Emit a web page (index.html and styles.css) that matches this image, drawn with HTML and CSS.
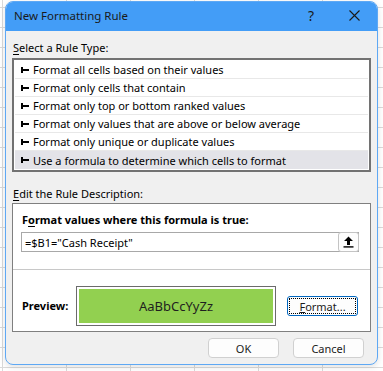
FILE: index.html
```html
<!DOCTYPE html>
<html lang="en">
<head>
    <meta charset="UTF-8">
    <meta name="viewport" content="width=device-width, initial-scale=1.0">
    <title>New Formatting Rule</title>
    <link rel="stylesheet" href="styles.css">
</head>
<body>

    <div class="dialog">
        <div class="titlebar">
            <span class="title">New Formatting Rule</span>
            <span class="title-btn help">?</span>
            <span class="title-btn close">
                <svg width="11" height="11" viewBox="0 0 11 11"><path d="M0.5 0.5L10.5 10.5M10.5 0.5L0.5 10.5" stroke="#1a1a1a" stroke-width="1.1" fill="none"/></svg>
            </span>
        </div>

        <div class="content">
            <div class="label"><u>S</u>elect a Rule Type:</div>
            <ul class="rule-list">
                <li><svg class="bullet" width="8" height="6" viewBox="0 0 8 6"><path d="M0 0h2v6H0zM0 2h8v2H0z" fill="#000"/></svg>Format all cells based on their values</li>
                <li><svg class="bullet" width="8" height="6" viewBox="0 0 8 6"><path d="M0 0h2v6H0zM0 2h8v2H0z" fill="#000"/></svg>Format only cells that contain</li>
                <li><svg class="bullet" width="8" height="6" viewBox="0 0 8 6"><path d="M0 0h2v6H0zM0 2h8v2H0z" fill="#000"/></svg>Format only top or bottom ranked values</li>
                <li><svg class="bullet" width="8" height="6" viewBox="0 0 8 6"><path d="M0 0h2v6H0zM0 2h8v2H0z" fill="#000"/></svg>Format only values that are above or below average</li>
                <li><svg class="bullet" width="8" height="6" viewBox="0 0 8 6"><path d="M0 0h2v6H0zM0 2h8v2H0z" fill="#000"/></svg>Format only unique or duplicate values</li>
                <li class="selected"><svg class="bullet" width="8" height="6" viewBox="0 0 8 6"><path d="M0 0h2v6H0zM0 2h8v2H0z" fill="#000"/></svg>Use a formula to determine which cells to format</li>
            </ul>

            <div class="label desc-label"><u>E</u>dit the Rule Description:</div>
            <div class="desc-box">
                <div class="formula-section">
                    <div class="bold-label">F<u>o</u>rmat values where this formula is true:</div>
                    <div class="formula-input">
                        <span class="formula-text">=$B1="Cash Receipt"</span>
                        <span class="collapse-btn">
                            <svg width="11" height="12" viewBox="0 0 11 12"><path d="M5.5 0.5L10 5H7v4H4V5H1z" fill="#000"/><rect x="0.5" y="10.2" width="10" height="1.4" fill="#000"/></svg>
                        </span>
                    </div>
                </div>
                <div class="preview-section">
                    <span class="bold-label preview-label">Preview:</span>
                    <div class="preview"><div class="swatch">AaBbCcYyZz</div></div>
                    <button class="btn format-btn"><span class="focus-ring"><u>F</u>ormat...</span></button>
                </div>
            </div>

            <div class="actions">
                <button class="btn">OK</button>
                <button class="btn">Cancel</button>
            </div>
        </div>
    </div>

</body>
</html>
```

FILE: styles.css
```css
body { margin: 0; padding: 1px 0 0 5px; height: 371px; box-sizing: border-box; overflow: hidden; font-family: 'Noto Sans', sans-serif; font-size: 11px; color: #000;
    background-color: #fff;
    background-image: linear-gradient(to right, #dadada 1px, transparent 1px), linear-gradient(to bottom, #dadada 1px, transparent 1px);
    background-size: 64px 20px; background-position: 2px 7px; }

/* Ventana */
.dialog { width: 373px; height: 364px; box-sizing: border-box; border: 1px solid #5ea8f4; border-radius: 8px; background: #f0f0f0; overflow: hidden; box-shadow: 0 2px 6px rgba(0, 0, 0, 0.12); }
.titlebar { height: 29px; background: #439df7; display: flex; align-items: center; padding: 0 0 2px 8px; box-sizing: border-box; color: #1a1a1a; }
.title { flex: 1; font-size: 11.5px; }
.title-btn { width: 46px; text-align: center; display: flex; justify-content: center; align-items: center; font-size: 14px; }
.help { padding-left: 6px; box-sizing: border-box; }

/* Contenido */
.content { padding: 0 6px; }
.label { line-height: 16px; margin-top: 9px; margin-bottom: 2px; padding-left: 1px; }
.desc-label { margin-top: 14px; margin-bottom: 1px; }
u { text-decoration-thickness: 1px; text-underline-offset: 2px; }

.rule-list { list-style: none; margin: 0; padding: 1px; background: #fff; border: 2px solid #727272; }
.rule-list li { height: 17px; border-bottom: 1px solid #e8e8e8; display: flex; align-items: center; padding-left: 6px; white-space: nowrap; }
.rule-list li:last-child { border-bottom: none; height: 18px; }
.rule-list li.selected { background: #e3e3e8; }
.bullet { margin-right: 4px; flex: none; }

.desc-box { background: #fff; border: 1px solid #7f7f7f; }
.formula-section { padding: 8px 11px 17px 8px; border-bottom: 1px solid #c8c8c8; }
.bold-label { font-weight: 700; line-height: 16px; padding-left: 1px; }
.formula-input { margin-top: 4px; height: 20px; box-sizing: border-box; border: 1px solid #a8a8a8; display: flex; align-items: center; }
.formula-text { flex: 1; padding-left: 3px; }
.collapse-btn { width: 21px; height: 20px; margin: -1px -1px -1px 0; box-sizing: border-box; border: 1px solid #c4c4c4; border-radius: 3px; background: #fdfdfd; display: flex; justify-content: center; align-items: center; }

.preview-section { display: flex; align-items: center; padding: 16px 0 5px 8px; }
.preview-label { width: 54px; }
.preview { width: 200px; height: 40px; box-sizing: border-box; border: 1px solid #6b6b6b; padding: 2px; background: #fff; }
.swatch { height: 100%; background: #92d050; display: flex; justify-content: center; align-items: center; font-size: 13px; color: #1f1f1f; }

.btn { font-family: 'Noto Sans', sans-serif; font-size: 11px; color: #1b1b1b; width: 71px; height: 20px; padding: 0; border: 1px solid #d0d0d0; border-radius: 4px; background: #fdfdfd; }
.format-btn { margin-left: 11px; border-color: #0067c0; border-radius: 3px; padding: 1px; }
.focus-ring { display: flex; justify-content: center; align-items: center; height: 100%; box-sizing: border-box; border: 1px dotted #000; }
.focus-ring u { text-underline-offset: 1px; }

.actions { display: flex; justify-content: flex-end; gap: 14px; margin-top: 6px; padding-right: 7px; }
```
